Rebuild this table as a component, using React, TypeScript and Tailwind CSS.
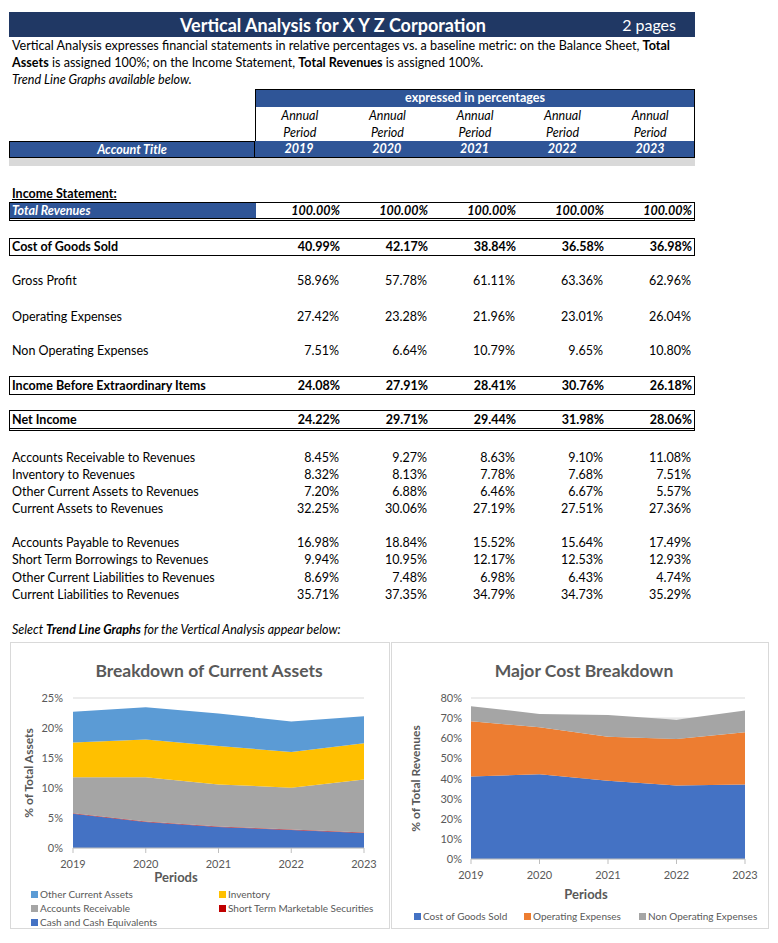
import React from 'react';

const YEARS = ['2019', '2020', '2021', '2022', '2023'];

type RowProps = {
  label: string;
  vals: number[];
  bold?: boolean;
  box?: boolean;
  double?: boolean;
  className?: string;
};

const pct = (v: number) => `${v.toFixed(2)}%`;

function Row({ label, vals, bold, box, double, className = '' }: RowProps) {
  const frame = box
    ? `border-t border-l border-r border-black ${double ? 'border-b-[3px] border-double' : 'border-b'}`
    : '';
  return (
    <div
      className={`ml-[9px] grid w-[686px] grid-cols-[246px_repeat(5,88px)] items-center text-[12.5px] leading-[16px] ${bold ? 'font-bold' : ''} ${frame} ${className}`}
    >
      <div className={box ? 'pl-[2px]' : 'pl-[3px]'}>{label}</div>
      {vals.map((v, i) => (
        <div key={i} className="pr-[4px] text-right">
          {pct(v)}
        </div>
      ))}
    </div>
  );
}

type Series = { name: string; color: string; tops: number[] };

function AreaChart({
  width,
  title,
  titleX,
  yTitle,
  yTitleX,
  plot,
  max,
  step,
  series,
  yLabelX,
  xLabelY,
  periodsX,
  periodsY,
  legend,
}: {
  width: number;
  title: string;
  titleX: number;
  yTitle: string;
  yTitleX: number;
  plot: { x0: number; x1: number; y0: number; y1: number };
  max: number;
  step: number;
  series: Series[];
  yLabelX: number;
  xLabelY: number;
  periodsX: number;
  periodsY: number;
  legend: { name: string; color: string; x: number; y: number }[];
}) {
  const xs = YEARS.map((_, i) => plot.x0 + ((plot.x1 - plot.x0) * i) / 4);
  const sy = (v: number) => plot.y1 - ((plot.y1 - plot.y0) * v) / max;
  const ticks: number[] = [];
  for (let v = 0; v <= max; v += step) ticks.push(v);

  return (
    <svg width={width} height={286} className="block">
      <text x={titleX} y={34} textAnchor="middle" fontSize="17.5" fontWeight="700" fill="#595959">
        {title}
      </text>
      {ticks.map((t) => (
        <g key={t}>
          <line x1={plot.x0} x2={plot.x1} y1={sy(t)} y2={sy(t)} stroke="#d9d9d9" strokeWidth="1" />
          <text x={yLabelX} y={sy(t) + 4} textAnchor="end" fontSize="11" fill="#595959">
            {t}%
          </text>
        </g>
      ))}
      {series.map((s, si) => {
        const below = si === 0 ? xs.map(() => 0) : series[si - 1].tops;
        const pts = [
          ...xs.map((x, i) => `${x},${sy(s.tops[i])}`),
          ...xs
            .map((x, i) => `${x},${sy(below[i])}`)
            .reverse(),
        ].join(' ');
        return <polygon key={s.name} points={pts} fill={s.color} />;
      })}
      <line x1={plot.x0} x2={plot.x1} y1={plot.y1} y2={plot.y1} stroke="#bfbfbf" strokeWidth="1" />
      {xs.map((x, i) => (
        <g key={i}>
          <line x1={x} x2={x} y1={plot.y1} y2={plot.y1 + 5} stroke="#bfbfbf" strokeWidth="1" />
          <text x={x} y={xLabelY} textAnchor="middle" fontSize="11" fill="#595959">
            {YEARS[i]}
          </text>
        </g>
      ))}
      <text x={periodsX} y={periodsY} textAnchor="middle" fontSize="13" fontWeight="700" fill="#595959">
        Periods
      </text>
      <text
        x={0}
        y={0}
        transform={`translate(${yTitleX} ${(plot.y0 + plot.y1) / 2}) rotate(-90)`}
        textAnchor="middle"
        fontSize="12"
        fontWeight="700"
        fill="#595959"
      >
        {yTitle}
      </text>
      {legend.map((l) => (
        <g key={l.name}>
          <rect x={l.x} y={l.y - 7} width={7} height={7} fill={l.color} />
          <text x={l.x + 9} y={l.y} fontSize="10" fill="#595959">
            {l.name}
          </text>
        </g>
      ))}
    </svg>
  );
}

export default function App() {
  return (
    <div className="relative h-[943px] w-[778px] bg-white font-['Lato','Noto_Sans',sans-serif] text-black">
      {/* title bar */}
      <div className="ml-[9px] mt-[12px] flex h-[25px] w-[686px] items-center bg-[#203864] text-white">
        <div className="pl-[171px] text-[18px] font-bold leading-none">
          Vertical Analysis for X Y Z Corporation
        </div>
        <div className="ml-auto pr-[19px] text-[16px] leading-none">2 pages</div>
      </div>

      <div className="pl-[12px] text-[12.6px] leading-[17px]">
        Vertical Analysis expresses financial statements in relative percentages vs. a baseline metric: on the Balance Sheet,{' '}
        <b>Total</b>
        <br />
        <b>Assets</b> is assigned 100%; on the Income Statement, <b>Total Revenues</b> is assigned 100%.
        <br />
        <i>Trend Line Graphs available below.</i>
      </div>

      {/* column header */}
      <div className="ml-[9px] mt-[1px] w-[686px]">
        <div className="flex h-[18px]">
          <div className="w-[246px]" />
          <div className="flex w-[440px] items-center justify-center border-l border-r border-t border-black bg-[#2F5597] text-[12.5px] font-bold text-white">
            expressed in percentages
          </div>
        </div>
        <div className="flex h-[34px]">
          <div className="w-[246px]" />
          <div className="grid w-[440px] grid-cols-5 border-l border-r border-black text-[12.5px] italic leading-[17px]">
            {YEARS.map((y) => (
              <div key={y} className="text-center">
                Annual
                <br />
                Period
              </div>
            ))}
          </div>
        </div>
        <div className="flex h-[17px] border-b border-black bg-[#2F5597] text-[12.5px] font-bold italic leading-[16px] text-white">
          <div className="flex w-[246px] items-center justify-center border-l border-r border-t border-black">
            Account Title
          </div>
          <div className="grid w-[440px] grid-cols-5 items-center border-r border-black">
            {YEARS.map((y) => (
              <div key={y} className="text-center">
                {y}
              </div>
            ))}
          </div>
        </div>
        <div className="h-[8px] bg-[#d9d9d9]" />
      </div>

      <div className="ml-[12px] mt-[20px] h-[16px] text-[12.5px] font-bold leading-[16px] underline">
        Income Statement:
      </div>

      <div className="ml-[9px] grid h-[19px] w-[686px] grid-cols-[246px_repeat(5,88px)] items-stretch border-b-[3px] border-l border-r border-t border-double border-black text-[12.5px] font-bold italic leading-[15px]">
        <div className="bg-[#2F5597] pl-[2px] text-white">Total Revenues</div>
        {[100, 100, 100, 100, 100].map((v, i) => (
          <div key={i} className="pr-[4px] text-right">
            {pct(v)}
          </div>
        ))}
      </div>

      <Row className="mt-[17px] h-[18px]" label="Cost of Goods Sold" vals={[40.99, 42.17, 38.84, 36.58, 36.98]} bold box />
      <Row className="mt-[16px] h-[18px]" label="Gross Profit" vals={[58.96, 57.78, 61.11, 63.36, 62.96]} />
      <Row className="mt-[18px] h-[18px]" label="Operating Expenses" vals={[27.42, 23.28, 21.96, 23.01, 26.04]} />
      <Row className="mt-[16px] h-[18px]" label="Non Operating Expenses" vals={[7.51, 6.64, 10.79, 9.65, 10.8]} />
      <Row className="mt-[16px] h-[19px]" label="Income Before Extraordinary Items" vals={[24.08, 27.91, 28.41, 30.76, 26.18]} bold box />
      <Row className="mt-[15px] h-[21px]" label="Net Income" vals={[24.22, 29.71, 29.44, 31.98, 28.06]} bold box double />

      <div className="mt-[18px]">
        <Row className="h-[17px]" label="Accounts Receivable to Revenues" vals={[8.45, 9.27, 8.63, 9.1, 11.08]} />
        <Row className="h-[17px]" label="Inventory to Revenues" vals={[8.32, 8.13, 7.78, 7.68, 7.51]} />
        <Row className="h-[17px]" label="Other Current Assets to Revenues" vals={[7.2, 6.88, 6.46, 6.67, 5.57]} />
        <Row className="h-[17px]" label="Current Assets to Revenues" vals={[32.25, 30.06, 27.19, 27.51, 27.36]} />
      </div>

      <div className="mt-[17px]">
        <Row className="h-[17.5px]" label="Accounts Payable to Revenues" vals={[16.98, 18.84, 15.52, 15.64, 17.49]} />
        <Row className="h-[17.5px]" label="Short Term Borrowings to Revenues" vals={[9.94, 10.95, 12.17, 12.53, 12.93]} />
        <Row className="h-[17.5px]" label="Other Current Liabilities to Revenues" vals={[8.69, 7.48, 6.98, 6.43, 4.74]} />
        <Row className="h-[17.5px]" label="Current Liabilities to Revenues" vals={[35.71, 37.35, 34.79, 34.73, 35.29]} />
      </div>

      <div className="ml-[12px] mt-[18px] h-[16px] text-[12.5px] italic leading-[16px]">
        Select <b>Trend Line Graphs</b> for the Vertical Analysis appear below:
      </div>

      <div className="ml-[10px] mt-[4px] flex gap-[1px]">
        <div className="h-[287px] w-[380px] border border-[#d9d9d9]">
          <AreaChart
            width={378}
            title="Breakdown of Current Assets"
            titleX={198}
            yTitle="% of Total Assets"
            yTitleX={22}
            plot={{ x0: 62, x1: 353, y0: 55, y1: 205 }}
            max={25}
            step={5}
            yLabelX={52}
            xLabelY={225}
            periodsX={165}
            periodsY={239}
            series={[
              { name: 'Cash and Cash Equivalents', color: '#4472C4', tops: [5.7, 4.35, 3.5, 3.0, 2.5] },
              { name: 'Short Term Marketable Securities', color: '#C00000', tops: [5.78, 4.43, 3.58, 3.08, 2.58] },
              { name: 'Accounts Receivable', color: '#A5A5A5', tops: [11.8, 11.8, 10.6, 10.05, 11.4] },
              { name: 'Inventory', color: '#FFC000', tops: [17.6, 18.1, 17.0, 16.0, 17.45] },
              { name: 'Other Current Assets', color: '#5B9BD5', tops: [22.7, 23.45, 22.4, 21.1, 21.95] },
            ]}
            legend={[
              { name: 'Other Current Assets', color: '#5B9BD5', x: 20, y: 255 },
              { name: 'Inventory', color: '#FFC000', x: 208, y: 255 },
              { name: 'Accounts Receivable', color: '#A5A5A5', x: 20, y: 269 },
              { name: 'Short Term Marketable Securities', color: '#C00000', x: 208, y: 269 },
              { name: 'Cash and Cash Equivalents', color: '#4472C4', x: 20, y: 283 },
            ]}
          />
        </div>
        <div className="h-[287px] w-[378px] border border-[#d9d9d9]">
          <AreaChart
            width={376}
            title="Major Cost Breakdown"
            titleX={192}
            yTitle="% of Total Revenues"
            yTitleX={28}
            plot={{ x0: 79, x1: 353, y0: 55, y1: 216 }}
            max={80}
            step={10}
            yLabelX={70}
            xLabelY={236}
            periodsX={194}
            periodsY={256}
            series={[
              { name: 'Cost of Goods Sold', color: '#4472C4', tops: [40.99, 42.17, 38.84, 36.58, 36.98] },
              { name: 'Operating Expenses', color: '#ED7D31', tops: [68.41, 65.45, 60.8, 59.59, 63.02] },
              { name: 'Non Operating Expenses', color: '#A5A5A5', tops: [75.92, 72.09, 71.59, 69.24, 73.82] },
            ]}
            legend={[
              { name: 'Cost of Goods Sold', color: '#4472C4', x: 22, y: 277 },
              { name: 'Operating Expenses', color: '#ED7D31', x: 132, y: 277 },
              { name: 'Non Operating Expenses', color: '#A5A5A5', x: 247, y: 277 },
            ]}
          />
        </div>
      </div>
    </div>
  );
}
